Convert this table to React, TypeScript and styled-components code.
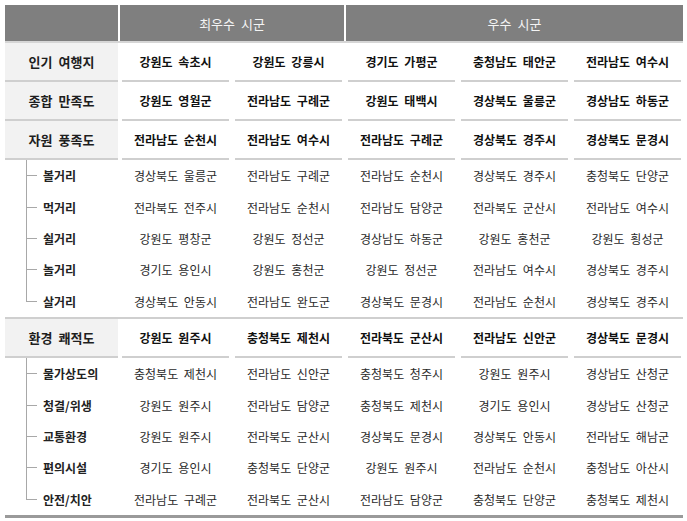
import styled, { createGlobalStyle } from "styled-components";

const GlobalStyle = createGlobalStyle`
  body {
    margin: 0;
    background: #ffffff;
    font-family: "Noto Sans CJK KR", "Noto Sans", sans-serif;
    word-spacing: 3px;
  }
`;

const Table = styled.div`
  padding: 5px 0 0 5px;
  width: 678px;
`;

const Row = styled.div`
  display: grid;
  grid-template-columns: 113px repeat(5, 111px);
  column-gap: 2px;
`;

const HeaderRow = styled(Row)`
  border-bottom: 2px solid #d6d6d6;
`;

const HeaderCell = styled.div<{ $span?: number }>`
  grid-column: span ${({ $span }) => $span ?? 1};
  height: 36px;
  background: #7f7f7f;
  color: #f4f4f4;
  font-size: 13px;
  display: flex;
  align-items: center;
  justify-content: center;
`;

const Group = styled.div<{ $last?: boolean }>`
  border-bottom: ${({ $last }) => ($last ? "3px solid #9a9a9a" : "none")};
`;

const Label = styled.div`
  height: 37px;
  background: #f2f2f2;
  border-bottom: 2px solid #cfcfcf;
  font-size: 13px;
  font-weight: 700;
  color: #1e1e1e;
  display: flex;
  align-items: center;
  justify-content: center;
`;

const Cell = styled.div`
  height: 37px;
  border-bottom: 2px solid #cfcfcf;
  margin: 0 2px;
  font-size: 12px;
  font-weight: 700;
  color: #111;
  display: flex;
  align-items: center;
  justify-content: center;
`;

const SubRows = styled.div<{ $ruled?: boolean }>`
  border-bottom: ${({ $ruled }) => ($ruled ? "2px solid #cfcfcf" : "none")};
`;

const SubLabel = styled.div`
  height: 31.4px;
  display: flex;
  align-items: stretch;
  font-size: 12px;
  font-weight: 700;
  color: #222;
`;

const Connector = styled.div`
  width: 11px;
  margin-left: 21px;
  margin-right: 6px;
  display: flex;
  flex-direction: column;
`;

const Upper = styled.div`
  flex: 1;
  border-left: 1px solid #a8a8a8;
  border-bottom: 1px solid #a8a8a8;
`;

const Lower = styled.div<{ $last?: boolean }>`
  flex: 1;
  border-left: ${({ $last }) => ($last ? "none" : "1px solid #a8a8a8")};
`;

const SubText = styled.span`
  display: flex;
  align-items: center;
`;

const SubCell = styled.div`
  height: 31.4px;
  font-size: 12px;
  color: #2a2a2a;
  display: flex;
  align-items: center;
  justify-content: center;
`;

type Sub = { name: string; cities: string[] };
type Section = { name: string; cities: string[]; subs?: Sub[] };

const sections: Section[] = [
  {
    name: "인기 여행지",
    cities: ["강원도 속초시", "강원도 강릉시", "경기도 가평군", "충청남도 태안군", "전라남도 여수시"],
  },
  {
    name: "종합 만족도",
    cities: ["강원도 영월군", "전라남도 구례군", "강원도 태백시", "경상북도 울릉군", "경상남도 하동군"],
  },
  {
    name: "자원 풍족도",
    cities: ["전라남도 순천시", "전라남도 여수시", "전라남도 구례군", "경상북도 경주시", "경상북도 문경시"],
    subs: [
      { name: "볼거리", cities: ["경상북도 울릉군", "전라남도 구례군", "전라남도 순천시", "경상북도 경주시", "충청북도 단양군"] },
      { name: "먹거리", cities: ["전라북도 전주시", "전라남도 순천시", "전라남도 담양군", "전라북도 군산시", "전라남도 여수시"] },
      { name: "쉴거리", cities: ["강원도 평창군", "강원도 정선군", "경상남도 하동군", "강원도 홍천군", "강원도 횡성군"] },
      { name: "놀거리", cities: ["경기도 용인시", "강원도 홍천군", "강원도 정선군", "전라남도 여수시", "경상북도 경주시"] },
      { name: "살거리", cities: ["경상북도 안동시", "전라남도 완도군", "경상북도 문경시", "전라남도 순천시", "경상북도 경주시"] },
    ],
  },
  {
    name: "환경 쾌적도",
    cities: ["강원도 원주시", "충청북도 제천시", "전라북도 군산시", "전라남도 신안군", "경상북도 문경시"],
    subs: [
      { name: "물가상도의", cities: ["충청북도 제천시", "전라남도 신안군", "충청북도 청주시", "강원도 원주시", "경상남도 산청군"] },
      { name: "청결/위생", cities: ["강원도 원주시", "전라남도 담양군", "충청북도 제천시", "경기도 용인시", "경상남도 산청군"] },
      { name: "교통환경", cities: ["강원도 원주시", "전라북도 군산시", "경상북도 문경시", "경상북도 안동시", "전라남도 해남군"] },
      { name: "편의시설", cities: ["경기도 용인시", "충청북도 단양군", "강원도 원주시", "전라남도 순천시", "충청남도 아산시"] },
      { name: "안전/치안", cities: ["전라남도 구례군", "전라북도 군산시", "전라남도 담양군", "충청북도 단양군", "충청북도 제천시"] },
    ],
  },
];

export default function App() {
  return (
    <>
      <GlobalStyle />
      <Table>
        <HeaderRow>
          <HeaderCell />
          <HeaderCell $span={2}>최우수 시군</HeaderCell>
          <HeaderCell $span={3}>우수 시군</HeaderCell>
        </HeaderRow>
        {sections.map((section, si) => {
          const isLast = si === sections.length - 1;
          return (
            <Group key={section.name} $last={isLast}>
              <Row>
                <Label>{section.name}</Label>
                {section.cities.map((city, ci) => (
                  <Cell key={ci}>{city}</Cell>
                ))}
              </Row>
              {section.subs && (
                <SubRows $ruled={!isLast}>
                  {section.subs.map((sub, i) => (
                    <Row key={sub.name}>
                      <SubLabel>
                        <Connector>
                          <Upper />
                          <Lower $last={i === section.subs!.length - 1} />
                        </Connector>
                        <SubText>{sub.name}</SubText>
                      </SubLabel>
                      {sub.cities.map((city, ci) => (
                        <SubCell key={ci}>{city}</SubCell>
                      ))}
                    </Row>
                  ))}
                </SubRows>
              )}
            </Group>
          );
        })}
      </Table>
    </>
  );
}
